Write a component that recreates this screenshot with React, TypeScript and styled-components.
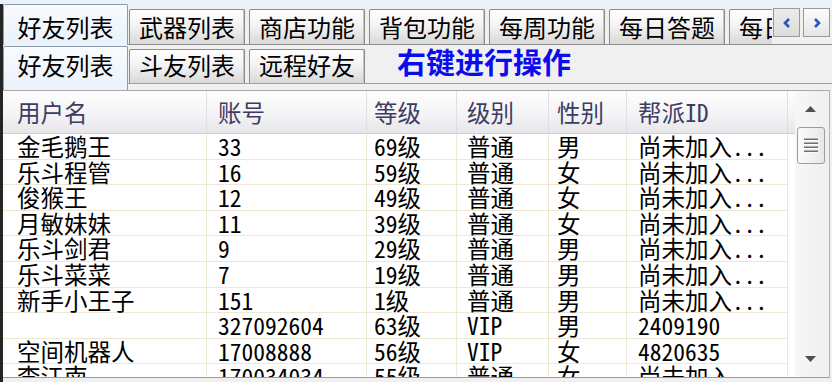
import React from 'react';
import styled, { createGlobalStyle, css } from 'styled-components';

const FONT = `"Noto Sans Mono CJK SC", "Noto Sans CJK SC", "Liberation Sans", sans-serif`;

const GlobalStyle = createGlobalStyle`
  html, body { margin: 0; padding: 0; background: #f0f0f0; }
  body { font-family: ${FONT}; color: #000; }
  #root { width: 832px; height: 382px; }
`;

const Window = styled.div`
  width: 832px;
  height: 382px;
  overflow: hidden;
  display: flex;
  flex-direction: column;
  background: #f0f0f0;
`;

const TopStrip = styled.div`
  flex: none;
  height: 4px;
  background: #eaf1f8;
`;

const Frame = styled.div`
  flex: 1;
  min-height: 0;
  display: flex;
  flex-direction: column;
  border-left: 3px solid #252525;
`;

const OuterBar = styled.div`
  flex: none;
  height: 41px;
  display: flex;
  align-items: flex-start;
  box-shadow: inset 0 -1px 0 #8e8e8e;
`;

const TabStrip = styled.div`
  flex: 1;
  min-width: 0;
  height: 100%;
  display: flex;
  align-items: flex-end;
  overflow: hidden;
`;

const tabLook = css<{ $active?: boolean }>`
  flex: none;
  box-sizing: border-box;
  display: flex;
  align-items: center;
  justify-content: center;
  font-size: 24px;
  line-height: 1;
  white-space: nowrap;
  border: 1px solid ${(p) => (p.$active ? '#8c9bad' : '#8c8c8c')};
  border-bottom: none;
  border-radius: 2px 2px 0 0;
  background: ${(p) =>
    p.$active
      ? 'linear-gradient(#f8fbfe, #eaf2fa)'
      : 'linear-gradient(#fefefe, #f3f3f3 45%, #d9d9d9)'};
  box-shadow: ${(p) => (p.$active ? 'none' : 'inset -1px 0 0 #c2c2c2')};
  position: relative;
  z-index: ${(p) => (p.$active ? 1 : 0)};
`;

const OuterTab = styled.div<{ $active?: boolean }>`
  ${tabLook};
  width: ${(p) => (p.$active ? 125 : 116)}px;
  height: ${(p) => (p.$active ? 41 : 35)}px;
  margin-bottom: ${(p) => (p.$active ? 0 : 1)}px;
  margin-right: ${(p) => (p.$active ? 1 : 4)}px;
  padding: ${(p) => (p.$active ? '5px 0 1px' : '0')};
`;

const ArrowBtns = styled.div`
  flex: none;
  display: flex;
  gap: 3px;
  margin: 4px 2px 0 1px;
`;

const ArrowBtn = styled.div<{ $dim?: boolean }>`
  width: 27px;
  height: 29px;
  box-sizing: border-box;
  border: 1px solid #9a9a9a;
  background: ${(p) =>
    p.$dim ? 'linear-gradient(#ececec, #dcdcdc)' : 'linear-gradient(#fbfbfb, #e6e6e6)'};
  display: flex;
  align-items: center;
  justify-content: center;
`;

const OuterPage = styled.div`
  flex: 1;
  min-height: 0;
  display: flex;
  flex-direction: column;
`;

const InnerBar = styled.div`
  flex: none;
  height: 39px;
  display: flex;
  align-items: flex-end;
  box-shadow: inset 0 -1px 0 #a0a0a0;
`;

const InnerTab = styled.div<{ $active?: boolean }>`
  ${tabLook};
  width: ${(p) => (p.$active ? 125 : 116)}px;
  height: ${(p) => (p.$active ? 44 : 34)}px;
  margin-bottom: ${(p) => (p.$active ? -6 : 1)}px;
  margin-right: ${(p) => (p.$active ? 1 : 4)}px;
  padding: ${(p) => (p.$active ? '4px 0 11px' : '0 0 3px')};
`;

const Hint = styled.div`
  align-self: center;
  margin-left: 28px;
  padding-bottom: 7px;
  font-family: "Noto Sans CJK SC", sans-serif;
  font-weight: 700;
  font-size: 29px;
  line-height: 1;
  color: #0b0bf0;
  white-space: nowrap;
`;

const InnerPage = styled.div`
  flex: 1;
  min-height: 0;
  display: flex;
  flex-direction: column;
  padding: 6px 2px 4px 0;
`;

const ListView = styled.div`
  flex: 1;
  min-height: 0;
  display: flex;
  border-top: 1px solid #a8a8a8;
  border-bottom: 1px solid #9c9c9c;
  border-right: 1px solid #b4b4b4;
`;

const ListArea = styled.div`
  flex: 1;
  min-width: 0;
  display: flex;
  flex-direction: column;
  background: #fff;
  overflow: hidden;
`;

const COLS = '204px 160px 90px 92px 78px 161px 1fr';
const PADS = [14, 11, 7, 10, 8, 11];

const HeaderRow = styled.div`
  flex: none;
  height: 43px;
  box-sizing: border-box;
  display: grid;
  grid-template-columns: ${COLS};
  background: linear-gradient(#fdfdfd 0%, #f4f4f6 55%, #e7e7eb 100%);
  border-bottom: 1px solid #cfcfd2;
`;

const HeaderCell = styled.div<{ $pad: number; $last?: boolean }>`
  display: flex;
  align-items: center;
  padding-left: ${(p) => p.$pad}px;
  padding-top: 2px;
  box-sizing: border-box;
  border-right: ${(p) => (p.$last ? 'none' : '1px solid #e0e0e4')};
  font-size: 23.5px;
  line-height: 1;
  color: #3c3c64;
  white-space: nowrap;
`;

const Rows = styled.div`
  flex: 1;
  min-height: 0;
`;

const Row = styled.div`
  height: 25.6px;
  box-sizing: border-box;
  display: grid;
  grid-template-columns: ${COLS};
`;

const Cell = styled.div<{ $pad: number; $filler?: boolean }>`
  box-sizing: border-box;
  padding-left: ${(p) => p.$pad}px;
  border-right: ${(p) => (p.$filler ? 'none' : '1px solid #ece8d4')};
  border-bottom: ${(p) => (p.$filler ? 'none' : '1px solid #ece8d4')};
  font-size: 23.5px;
  line-height: 24px;
  white-space: nowrap;
`;

const Scrollbar = styled.div`
  flex: none;
  width: 34px;
  box-sizing: border-box;
  padding-right: 4px;
  display: flex;
  flex-direction: column;
  background: linear-gradient(90deg, #f7f7f7, #efefef);
`;

const ScrollArrow = styled.div`
  flex: none;
  height: 36px;
  display: flex;
  align-items: center;
  justify-content: center;
`;

const Thumb = styled.div`
  flex: none;
  height: 37px;
  margin-left: 2px;
  box-sizing: border-box;
  border: 1px solid #9d9d9d;
  border-radius: 3px;
  background: linear-gradient(90deg, #fafafa, #e8e8e8);
  display: flex;
  align-items: center;
  justify-content: center;
`;

const Track = styled.div`
  flex: 1;
`;

const headers = ['用户名', '账号', '等级', '级别', '性别', '帮派ID'];

const rows: string[][] = [
  ['金毛鹅王', '33', '69级', '普通', '男', '尚未加入...'],
  ['乐斗程管', '16', '59级', '普通', '女', '尚未加入...'],
  ['俊猴王', '12', '49级', '普通', '女', '尚未加入...'],
  ['月敏妹妹', '11', '39级', '普通', '女', '尚未加入...'],
  ['乐斗剑君', '9', '29级', '普通', '男', '尚未加入...'],
  ['乐斗菜菜', '7', '19级', '普通', '男', '尚未加入...'],
  ['新手小王子', '151', '1级', '普通', '男', '尚未加入...'],
  ['', '327092604', '63级', 'VIP', '男', '2409190'],
  ['空间机器人', '17008888', '56级', 'VIP', '女', '4820635'],
  ['李江南', '170034034', '55级', '普通', '女', '尚未加入...'],
];

const outerTabs = ['好友列表', '武器列表', '商店功能', '背包功能', '每周功能', '每日答题', '每日任务'];
const innerTabs = ['好友列表', '斗友列表', '远程好友'];

const Chevron = ({ dir }: { dir: 'left' | 'right' }) => (
  <svg width="10" height="12" viewBox="0 0 10 12">
    <polyline
      points={dir === 'left' ? '7,2 3,6 7,10' : '3,2 7,6 3,10'}
      fill="none"
      stroke="#2a56bc"
      strokeWidth="2.6"
    />
  </svg>
);

const Tri = ({ up }: { up?: boolean }) => (
  <svg width="11" height="6" viewBox="0 0 11 6">
    <polygon points={up ? '0,6 11,6 5.5,0' : '0,0 11,0 5.5,6'} fill="#505050" />
  </svg>
);

const Grip = () => (
  <svg width="16" height="16" viewBox="0 0 16 16">
    {[2, 6, 10, 14].map((y) => (
      <g key={y}>
        <rect x="1" y={y - 1.5} width="14" height="1.6" fill="#6f6f6f" />
        <rect x="1" y={y + 0.1} width="14" height="0.9" fill="#ffffff" />
      </g>
    ))}
  </svg>
);

export default function App() {
  return (
    <>
      <GlobalStyle />
      <Window>
        <TopStrip />
        <Frame>
          <OuterBar>
            <TabStrip>
              {outerTabs.map((t, i) => (
                <OuterTab key={t + i} $active={i === 0}>
                  {t}
                </OuterTab>
              ))}
            </TabStrip>
            <ArrowBtns>
              <ArrowBtn $dim>
                <Chevron dir="left" />
              </ArrowBtn>
              <ArrowBtn>
                <Chevron dir="right" />
              </ArrowBtn>
            </ArrowBtns>
          </OuterBar>
          <OuterPage>
            <InnerBar>
              {innerTabs.map((t, i) => (
                <InnerTab key={t + i} $active={i === 0}>
                  {t}
                </InnerTab>
              ))}
              <Hint>右键进行操作</Hint>
            </InnerBar>
            <InnerPage>
              <ListView>
                <ListArea>
                  <HeaderRow>
                    {headers.map((h, i) => (
                      <HeaderCell key={h} $pad={PADS[i]}>
                        {h}
                      </HeaderCell>
                    ))}
                    <HeaderCell $pad={0} $last />
                  </HeaderRow>
                  <Rows>
                    {rows.map((r, ri) => (
                      <Row key={ri}>
                        {r.map((c, ci) => (
                          <Cell key={ci} $pad={PADS[ci]}>
                            {c}
                          </Cell>
                        ))}
                        <Cell $pad={0} $filler />
                      </Row>
                    ))}
                  </Rows>
                </ListArea>
                <Scrollbar>
                  <ScrollArrow>
                    <Tri up />
                  </ScrollArrow>
                  <Thumb>
                    <Grip />
                  </Thumb>
                  <Track />
                  <ScrollArrow>
                    <Tri />
                  </ScrollArrow>
                </Scrollbar>
              </ListView>
            </InnerPage>
          </OuterPage>
        </Frame>
      </Window>
    </>
  );
}
